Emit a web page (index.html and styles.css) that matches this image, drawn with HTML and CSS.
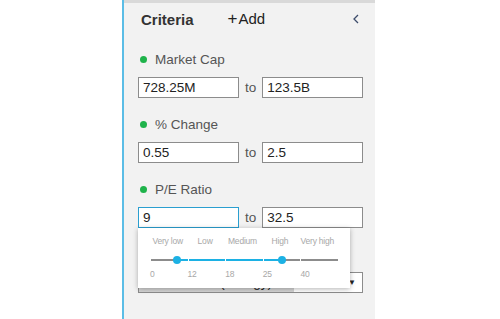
FILE: index.html
```html
<!DOCTYPE html>
<html lang="en">
<head>
    <meta charset="UTF-8">
    <meta name="viewport" content="width=device-width, initial-scale=1.0">
    <title>Screener criteria</title>
    <link rel="stylesheet" href="styles.css">
</head>
<body>
    <div class="page">
        <div class="gutter"></div>
        <aside class="panel">
            <div class="panel-top"></div>
            <header class="panel-head">
                <span class="title">Criteria</span>
                <span class="add"><span class="plus">+</span>Add</span>
                <svg class="collapse" width="6" height="10" viewBox="0 0 6 10">
                    <polyline points="5,1 1,5 5,9" fill="none" stroke="#3d4c6b" stroke-width="1.3"/>
                </svg>
            </header>

            <div class="criteria">
                <div class="criterion">
                    <div class="crit-label"><span class="dot"></span>Market Cap</div>
                    <div class="range">
                        <input class="field" type="text" value="728.25M">
                        <span class="to">to</span>
                        <input class="field" type="text" value="123.5B">
                    </div>
                </div>

                <div class="criterion">
                    <div class="crit-label"><span class="dot"></span>% Change</div>
                    <div class="range">
                        <input class="field" type="text" value="0.55">
                        <span class="to">to</span>
                        <input class="field" type="text" value="2.5">
                    </div>
                </div>

                <div class="criterion has-popup">
                    <div class="crit-label"><span class="dot"></span>P/E Ratio</div>
                    <div class="range">
                        <input class="field focused" type="text" value="9">
                        <span class="to">to</span>
                        <input class="field" type="text" value="32.5">
                    </div>

                    <!-- range helper shown under the focused field -->
                    <div class="popup">
                        <div class="scale-labels">
                            <span>Very low</span>
                            <span>Low</span>
                            <span>Medium</span>
                            <span>High</span>
                            <span>Very high</span>
                        </div>
                        <div class="slider">
                            <div class="track">
                                <span class="seg seg-in-start"></span>
                                <span class="seg on"></span>
                                <span class="seg on"></span>
                                <span class="seg seg-in-end"></span>
                                <span class="seg"></span>
                            </div>
                            <span class="handle" style="left: 13.9%"></span>
                            <span class="handle" style="left: 70%"></span>
                        </div>
                        <div class="scale-values">
                            <span>0</span>
                            <span>12</span>
                            <span>18</span>
                            <span>25</span>
                            <span>40</span>
                        </div>
                    </div>
                </div>

                <div class="criterion">
                    <div class="crit-label"><span class="dot"></span>Sector</div>
                    <div class="picker">
                        <span class="picker-value">(Energy)</span>
                        <span class="picker-icon"></span>
                        <span class="picker-arrow">&#9660;</span>
                    </div>
                </div>
            </div>
        </aside>
    </div>
</body>
</html>
```

FILE: styles.css
```css
body {
    margin: 0;
    padding: 0;
    background-color: #ffffff;
    font-family: "Liberation Sans", Arial, sans-serif;
    color: #333;
}
.page {
    display: flex;
    height: 319px;
    overflow: hidden;
}
.gutter {
    width: 122px;
    flex: none;
}
.panel {
    width: 253px;
    flex: none;
    box-sizing: border-box;
    border-left: 2px solid #5bbde6;
    background-color: #f2f2f2;
    padding: 0 12px 0 14px;
    position: relative;
}
.panel-top {
    height: 3px;
    margin: 0 -12px 0 -14px;
    background-color: #d9d9d9;
}
.panel-head {
    display: flex;
    align-items: center;
    height: 20px;
    padding-top: 6px;
    font-size: 15px;
}
.title {
    font-weight: bold;
    margin-left: 3px;
    color: #333;
}
.add {
    margin-left: 34px;
    color: #222;
}
.plus {
    font-size: 17px;
    margin-right: 1px;
}
.collapse {
    margin-left: auto;
    margin-right: 4px;
}
.criteria {
    padding-top: 20px;
}
.criterion {
    margin-bottom: 16px;
}
.crit-label {
    display: flex;
    align-items: center;
    height: 20px;
    font-size: 13.5px;
    color: #555;
}
.dot {
    width: 7px;
    height: 7px;
    border-radius: 50%;
    background-color: #1fb34b;
    margin: 0 8px 0 2px;
}
.range {
    display: flex;
    align-items: center;
    margin-top: 8px;
}
.field {
    flex: 1;
    min-width: 0;
    box-sizing: border-box;
    height: 21px;
    margin: 0;
    padding: 0 4px;
    border: 1px solid #8c8c8c;
    background-color: #fff;
    font-family: "Liberation Sans", Arial, sans-serif;
    font-size: 13.5px;
    color: #222;
    outline: none;
}
.field.focused {
    border-color: #2a9fd0;
}
.to {
    margin: 0 6px;
    font-size: 13.5px;
    color: #555;
}
.has-popup {
    position: relative;
}
.popup {
    position: absolute;
    left: 0;
    top: 49px;
    z-index: 2;
    width: 212px;
    height: 60px;
    box-sizing: border-box;
    padding: 8px 12px 0 13px;
    background-color: #fff;
    box-shadow: 0 1px 5px rgba(0, 0, 0, 0.3);
}
.scale-labels, .scale-values {
    display: grid;
    grid-template-columns: repeat(5, 1fr);
    font-size: 8.5px;
    line-height: 10px;
    letter-spacing: -0.2px;
    color: #a8a8a8;
}
.scale-labels span {
    text-align: center;
    margin-left: -4px;
}
.scale-values {
    margin-top: 5px;
    margin-left: -1px;
}
.slider {
    position: relative;
    height: 8px;
    margin-top: 10px;
    display: flex;
    align-items: center;
}
.track {
    display: flex;
    gap: 1px;
    width: 100%;
    height: 2px;
}
.seg {
    flex: 1;
    background-color: #8c8c8c;
}
.seg.on {
    background-color: #1cb1e4;
}
.seg-in-start {
    background: linear-gradient(to right, #8c8c8c 70%, #1cb1e4 70%);
}
.seg-in-end {
    background: linear-gradient(to right, #1cb1e4 50%, #8c8c8c 50%);
}
.handle {
    position: absolute;
    top: 0;
    width: 8px;
    height: 8px;
    margin-left: -4px;
    border-radius: 50%;
    background-color: #1cb1e4;
}
.picker {
    display: flex;
    align-items: center;
    box-sizing: border-box;
    height: 21px;
    margin-top: 8px;
    border: 1px solid #8c8c8c;
    background-color: #fff;
    font-size: 13.5px;
}
.picker-value {
    width: 155px;
    height: 19px;
    box-sizing: border-box;
    padding-right: 22px;
    text-align: right;
    line-height: 19px;
    background-color: #d4d4d4;
    color: #222;
}
.picker-icon {
    width: 7px;
    height: 7px;
    margin-left: auto;
    border-radius: 50%;
    background-color: #333;
}
.picker-arrow {
    font-size: 8px;
    margin: 0 6px 0 8px;
    color: #222;
}
```
